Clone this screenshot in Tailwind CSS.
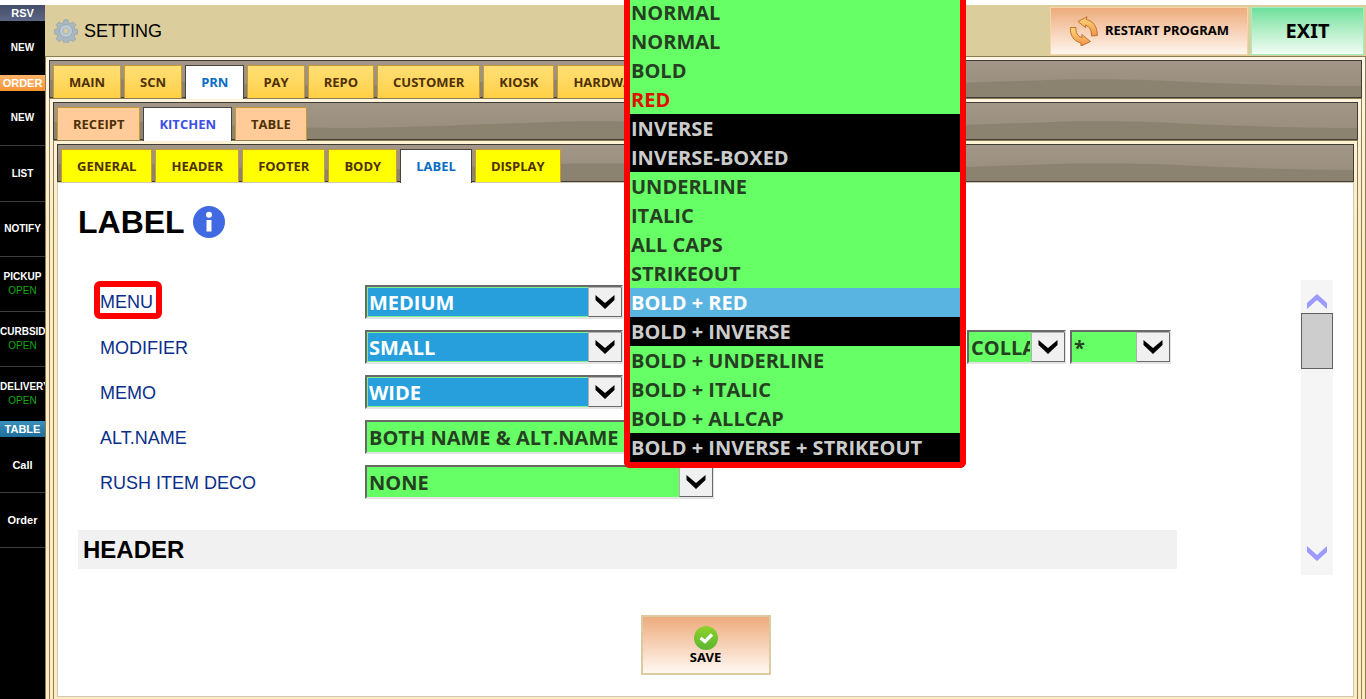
<!DOCTYPE html>
<html lang="en">
<head>
  <meta charset="UTF-8">
  <meta name="viewport" content="width=device-width, initial-scale=1.0">
  <title>Setting - Label</title>
  <script src="https://cdn.jsdelivr.net/npm/@tailwindcss/browser@4"></script>
</head>
<body class="h-screen flex flex-col overflow-hidden bg-white pt-[5px] text-black font-['Liberation_Sans',Arial,sans-serif]">

  <!-- Shared drawings -->
  <svg class="absolute size-0" aria-hidden="true">
    <defs>
      <linearGradient id="shade" x1="0" y1="0" x2="0" y2="1">
        <stop offset="0" stop-color="#a19687"/>
        <stop offset="1" stop-color="#978c7b"/>
      </linearGradient>
      <pattern id="wave" width="500" height="38" patternUnits="userSpaceOnUse">
        <rect width="500" height="38" fill="url(#shade)"/>
        <path d="M0 19C20 18 80 18 120 20S240 25 291 25S460 20 500 19V38H0Z" fill="#8b826f"/>
      </pattern>
      <symbol id="chevron" viewBox="0 0 20 14">
        <path d="M.500 0L10 8L19.500 0V5L10 14L.500 5Z"/>
      </symbol>
    </defs>
  </svg>

  <div class="flex-1 flex min-h-0">

    <!-- Sidebar -->
    <nav class="w-[45px] shrink-0 overflow-hidden bg-black text-white text-center text-[11px] leading-[14px] font-bold">
      <h2 class="h-4 leading-4 bg-linear-to-b from-[#454d69] to-[#5b6785]">RSV</h2>
      <a href="#" class="h-[54px] flex flex-col items-center justify-center text-[10px]">NEW</a>
      <h2 class="h-4 leading-4 bg-linear-to-b from-[#ffb469] to-[#f79433]">ORDER</h2>
      <a href="#" class="h-[55px] flex flex-col items-center justify-center border-b border-[#3c3c3c] text-[10px]">NEW</a>
      <a href="#" class="h-14 flex flex-col items-center justify-center border-b border-[#3c3c3c] text-[10px]">LIST</a>
      <a href="#" class="h-[55px] flex flex-col items-center justify-center border-b border-[#3c3c3c] text-[10px]">NOTIFY</a>
      <a href="#" class="h-[55px] flex flex-col items-center justify-center border-b border-[#3c3c3c] text-[10px]">PICKUP <span class="font-normal text-[#13a813]">OPEN</span></a>
      <a href="#" class="h-[55px] flex flex-col justify-center border-b border-[#3c3c3c] text-[10px]">CURBSIDE <span class="font-normal text-[#13a813]">OPEN</span></a>
      <a href="#" class="h-[54px] flex flex-col justify-center text-[10px]">DELIVERY <span class="font-normal text-[#13a813]">OPEN</span></a>
      <h2 class="h-4 leading-4 bg-linear-to-b from-[#3a90bd] to-[#1f6d9b]">TABLE</h2>
      <a href="#" class="h-14 flex flex-col items-center justify-center border-b border-[#3c3c3c]">Call</a>
      <a href="#" class="h-[55px] flex flex-col items-center justify-center border-b border-[#3c3c3c]">Order</a>
    </nav>

    <div class="flex-1 flex flex-col min-w-0">

      <!-- Title bar -->
      <header class="h-[51px] flex items-center gap-1.5 pl-[9px] pr-0.5 bg-[#dccd9c]">
        <svg class="size-6" viewBox="0 0 24 24">
          <g fill="#a9b8c2" stroke="#8c9aa3" stroke-width=".6">
            <path d="M10 .8h4l.6 3 2 .8 2.500-1.700 2.800 2.800-1.700 2.500.8 2 3 .6v4l-3 .6-.8 2 1.700 2.500-2.800 2.800-2.500-1.700-2 .8-.6 3h-4l-.6-3-2-.8-2.500 1.700-2.800-2.800 1.700-2.500-.8-2-3-.6v-4l3-.6.8-2L2.100 5.700l2.800-2.800 2.500 1.700 2-.8z"/>
          </g>
          <circle cx="12" cy="12" r="6.500" fill="#bccad2" stroke="#93a3ad" stroke-width=".8"/>
          <circle cx="12" cy="12" r="3.500" fill="#aebcc5"/>
          <circle cx="12" cy="12" r="2.200" fill="#dccd9c"/>
        </svg>
        <h1 class="flex-1 text-lg">SETTING</h1>
        <div class="flex gap-[3px] h-12 font-['Noto_Sans','Open_Sans',sans-serif] font-bold">
          <button type="button" class="w-[198px] flex items-center justify-center gap-[6px] border border-[#f8d3a4] bg-linear-to-b from-[#edab7c] to-[#fef6ee] text-[13px]">
            <svg class="size-[30px]" viewBox="0 0 30 30">
              <defs>
                <linearGradient id="arrow" x1="0" y1="0" x2="0" y2="1">
                  <stop offset="0" stop-color="#ffd777"/>
                  <stop offset="1" stop-color="#f5934a"/>
                </linearGradient>
              </defs>
              <g fill="url(#arrow)" stroke="#b36a28" stroke-width=".9" stroke-linejoin="round">
                <path d="M9 5.500L18 .8L17.300 3.500C24 5 28.500 10.500 28.300 19.500L22.500 20C22.700 14 20.500 10.500 16.500 9L16.800 11.800Z"/>
                <path d="M1.500 11.500H7C6.500 16.500 8.500 20.500 13 21.500L12.800 18.500L21.500 25.500L12 30V27C5 25.500 .8 19.500 1.500 11.500Z"/>
              </g>
            </svg>
            RESTART PROGRAM
          </button>
          <button type="button" class="w-[113px] border border-[#9df0bd] bg-linear-to-b from-[#6be09c] to-[#f2fcf5] text-xl">EXIT</button>
        </div>
      </header>

      <!-- Level 1 -->
      <div class="flex-1 flex flex-col min-h-0 border-t border-x border-[#8d7c55] bg-linear-to-b from-[#fff6e6] to-[#fcecc0] to-30% px-[3px] pt-[3px] font-['Open_Sans','Noto_Sans',sans-serif]">
        <div class="relative h-[38px] border border-[#423d33]">
          <svg class="absolute inset-0 size-full"><rect width="100%" height="100%" fill="url(#wave)"/></svg>
          <nav class="relative flex gap-[3px] pt-1 pl-[3px] text-[13px] leading-[32px] font-bold text-[#4f3005]">
            <a href="#" class="h-[33px] px-[15px] border border-b-0 border-[#c99a33] bg-linear-to-b from-[#ffdf74] to-[#ffd044]">MAIN</a>
            <a href="#" class="h-[33px] px-[15px] border border-b-0 border-[#c99a33] bg-linear-to-b from-[#ffdf74] to-[#ffd044]">SCN</a>
            <a href="#" class="h-[34px] z-10 px-[15px] border border-b-0 border-[#4a463f] bg-white text-[#0a6cc4]">PRN</a>
            <a href="#" class="h-[33px] px-[15px] border border-b-0 border-[#c99a33] bg-linear-to-b from-[#ffdf74] to-[#ffd044]">PAY</a>
            <a href="#" class="h-[33px] px-[15px] border border-b-0 border-[#c99a33] bg-linear-to-b from-[#ffdf74] to-[#ffd044]">REPO</a>
            <a href="#" class="h-[33px] px-[15px] border border-b-0 border-[#c99a33] bg-linear-to-b from-[#ffdf74] to-[#ffd044]">CUSTOMER</a>
            <a href="#" class="h-[33px] px-[15px] border border-b-0 border-[#c99a33] bg-linear-to-b from-[#ffdf74] to-[#ffd044]">KIOSK</a>
            <a href="#" class="h-[33px] px-[15px] border border-b-0 border-[#c99a33] bg-linear-to-b from-[#ffdf74] to-[#ffd044]">HARDWARE</a>
          </nav>
        </div>

        <!-- Level 2 -->
        <div class="flex-1 flex flex-col min-h-0 border-t border-x border-[#8d7c55] px-[3px] pt-[3px]">
          <div class="relative h-[38px] border border-[#423d33]">
            <svg class="absolute inset-0 size-full"><rect width="100%" height="100%" fill="url(#wave)"/></svg>
            <nav class="relative flex gap-[3px] pt-1 pl-[3px] text-[13px] leading-[32px] font-bold text-[#4f3005]">
              <a href="#" class="h-[33px] px-[15px] border border-b-0 border-[#c99a33] bg-[#ffcc99]">RECEIPT</a>
              <a href="#" class="h-[34px] z-10 px-[15px] border border-b-0 border-[#4a463f] bg-white text-[#3c50e6]">KITCHEN</a>
              <a href="#" class="h-[33px] px-[15px] border border-b-0 border-[#c99a33] bg-[#ffcc99]">TABLE</a>
            </nav>
          </div>

          <!-- Level 3 -->
          <div class="flex-1 flex flex-col min-h-0 border-t border-x border-[#8d7c55] px-[3px] pt-[3px] pb-0.5">
            <div class="relative h-[38px] border border-[#423d33]">
              <svg class="absolute inset-0 size-full"><rect width="100%" height="100%" fill="url(#wave)"/></svg>
              <nav class="relative flex gap-[3px] pt-1 pl-[3px] text-[13px] leading-[32px] font-bold text-[#4f3005]">
                <a href="#" class="h-[33px] px-[15px] border border-b-0 border-[#c99a33] bg-[#ffff00]">GENERAL</a>
                <a href="#" class="h-[33px] px-[15px] border border-b-0 border-[#c99a33] bg-[#ffff00]">HEADER</a>
                <a href="#" class="h-[33px] px-[15px] border border-b-0 border-[#c99a33] bg-[#ffff00]">FOOTER</a>
                <a href="#" class="h-[33px] px-[15px] border border-b-0 border-[#c99a33] bg-[#ffff00]">BODY</a>
                <a href="#" class="h-[34px] z-10 px-[15px] border border-b-0 border-[#4a463f] bg-white text-[#0a6cc4]">LABEL</a>
                <a href="#" class="h-[33px] px-[15px] border border-b-0 border-[#c99a33] bg-[#ffff00]">DISPLAY</a>
              </nav>
            </div>

            <main class="flex-1 flex flex-col border border-[#d0c8b2] bg-white pl-5 pr-5 pt-5 font-['Liberation_Sans',Arial,sans-serif]">
              <div class="flex items-center gap-2 h-[38px]">
                <h2 class="text-[32px] font-bold">LABEL</h2>
                <svg class="size-8" viewBox="0 0 32 32" role="img" aria-label="Info">
                  <circle cx="16" cy="16" r="16" fill="#4169e1"/>
                  <circle cx="16" cy="8.800" r="3" fill="#fff"/>
                  <path d="M13.500 14h5v11.500h-5z" fill="#fff"/>
                </svg>
              </div>

              <div class="flex mt-[39px]">
                <form class="flex-1 mr-[124px] text-lg text-[#0a2f8a]">
                  <div class="flex flex-col gap-[11px] pt-[5px] pl-[22px]">
                    <div class="flex items-center h-[34px]">
                      <div class="w-[265px] flex">
                        <label for="menuSize" class="-ml-1.5 -mt-1 pt-[5px] pr-[3px] border-6 border-[#ff0000] rounded-md leading-[21px]">MENU</label>
                      </div>
                      <div class="flex gap-1 font-['Open_Sans','Noto_Sans',sans-serif]">
                        <div class="relative">
                          <select id="menuSize" class="appearance-none block w-[258px] h-[34px] pt-0.5 pl-0.5 pr-[34px] border-2 border-t-[#696969] border-l-[#696969] border-r-[#e3e3e3] border-b-[#e3e3e3] bg-[#269fdc] shadow-[inset_0_0_0_1px_#7cf08c] text-xl leading-none font-bold text-white">
                            <option>MEDIUM</option>
                          </select>
                          <span class="absolute right-px top-0.5 bottom-0.5 w-[34px] flex justify-center pt-[7px] border border-[#696969] border-t-[#b0b0b0] border-l-[#b0b0b0] bg-[#f0f0f0] pointer-events-none"><svg class="w-5 h-3.5"><use href="#chevron"/></svg></span>
                        </div>
                        <div class="relative">
                          <select aria-label="Menu style" class="appearance-none block w-[336px] h-[34px] border-2 border-[#696969] bg-[#66ff66] text-xl">
                            <option></option>
                          </select>
                          <!-- Open style list -->
                          <ul role="listbox" aria-label="Menu style" class="absolute z-20 -left-[3px] -bottom-[149px] w-[342px] border-6 border-t-0 border-[#ff0000] rounded-b-md bg-[#66ff66] text-xl leading-[29px] font-bold text-[#263f22] *:pl-px">
                            <li role="option">NORMAL</li>
                            <li role="option">NORMAL</li>
                            <li role="option">BOLD</li>
                            <li role="option" class="text-[#e01000]">RED</li>
                            <li role="option" class="bg-black text-[#cccccc]">INVERSE</li>
                            <li role="option" class="bg-black text-[#cccccc]">INVERSE-BOXED</li>
                            <li role="option">UNDERLINE</li>
                            <li role="option">ITALIC</li>
                            <li role="option">ALL CAPS</li>
                            <li role="option">STRIKEOUT</li>
                            <li role="option" aria-selected="true" class="bg-[#5ab4e2] text-white">BOLD + RED</li>
                            <li role="option" class="bg-black text-[#cccccc]">BOLD + INVERSE</li>
                            <li role="option">BOLD + UNDERLINE</li>
                            <li role="option">BOLD + ITALIC</li>
                            <li role="option">BOLD + ALLCAP</li>
                            <li role="option" class="bg-black text-[#cccccc]">BOLD + INVERSE + STRIKEOUT</li>
                          </ul>
                        </div>
                      </div>
                    </div>

                    <div class="flex items-center h-[34px]">
                      <label for="modifierSize" class="w-[265px] pt-0.5">MODIFIER</label>
                      <div class="flex gap-1 font-['Open_Sans','Noto_Sans',sans-serif]">
                        <div class="relative">
                          <select id="modifierSize" class="appearance-none block w-[258px] h-[34px] pt-0.5 pl-0.5 pr-[34px] border-2 border-t-[#696969] border-l-[#696969] border-r-[#e3e3e3] border-b-[#e3e3e3] bg-[#269fdc] shadow-[inset_0_0_0_1px_#7cf08c] text-xl leading-none font-bold text-white">
                            <option>SMALL</option>
                          </select>
                          <span class="absolute right-px top-0.5 bottom-0.5 w-[34px] flex justify-center pt-[7px] border border-[#696969] border-t-[#b0b0b0] border-l-[#b0b0b0] bg-[#f0f0f0] pointer-events-none"><svg class="w-5 h-3.5"><use href="#chevron"/></svg></span>
                        </div>
                        <select aria-label="Modifier style" class="appearance-none block w-[336px] h-[34px] border-2 border-[#696969] bg-[#66ff66] text-xl">
                          <option></option>
                        </select>
                        <div class="relative">
                          <select aria-label="Modifier layout" class="appearance-none block w-[99px] h-[34px] pt-0.5 pl-0.5 pr-[34px] border-2 border-t-[#696969] border-l-[#696969] border-r-[#e3e3e3] border-b-[#e3e3e3] bg-[#66ff66] text-xl leading-none font-bold text-[#263f22]">
                            <option>COLLAPSE</option>
                          </select>
                          <span class="absolute right-px top-0.5 bottom-0.5 w-[34px] flex justify-center pt-[7px] border border-[#696969] border-t-[#b0b0b0] border-l-[#b0b0b0] bg-[#f0f0f0] pointer-events-none"><svg class="w-5 h-3.5"><use href="#chevron"/></svg></span>
                        </div>
                        <div class="relative">
                          <select aria-label="Modifier bullet" class="appearance-none block w-[101px] h-[34px] pt-0.5 pl-0.5 pr-[34px] border-2 border-t-[#696969] border-l-[#696969] border-r-[#e3e3e3] border-b-[#e3e3e3] bg-[#66ff66] text-xl leading-none font-bold text-[#263f22]">
                            <option>*</option>
                          </select>
                          <span class="absolute right-px top-0.5 bottom-0.5 w-[34px] flex justify-center pt-[7px] border border-[#696969] border-t-[#b0b0b0] border-l-[#b0b0b0] bg-[#f0f0f0] pointer-events-none"><svg class="w-5 h-3.5"><use href="#chevron"/></svg></span>
                        </div>
                      </div>
                    </div>

                    <div class="flex items-center h-[34px]">
                      <label for="memoSize" class="w-[265px] pt-0.5">MEMO</label>
                      <div class="relative font-['Open_Sans','Noto_Sans',sans-serif]">
                        <select id="memoSize" class="appearance-none block w-[258px] h-[34px] pt-0.5 pl-0.5 pr-[34px] border-2 border-t-[#696969] border-l-[#696969] border-r-[#e3e3e3] border-b-[#e3e3e3] bg-[#269fdc] shadow-[inset_0_0_0_1px_#7cf08c] text-xl leading-none font-bold text-white">
                          <option>WIDE</option>
                        </select>
                        <span class="absolute right-px top-0.5 bottom-0.5 w-[34px] flex justify-center pt-[7px] border border-[#696969] border-t-[#b0b0b0] border-l-[#b0b0b0] bg-[#f0f0f0] pointer-events-none"><svg class="w-5 h-3.5"><use href="#chevron"/></svg></span>
                      </div>
                    </div>

                    <div class="flex items-center h-[34px]">
                      <label for="altName" class="w-[265px] pt-0.5">ALT.NAME</label>
                      <div class="relative font-['Open_Sans','Noto_Sans',sans-serif]">
                        <select id="altName" class="appearance-none block w-[349px] h-[34px] pt-0.5 pl-0.5 pr-[34px] border-2 border-t-[#696969] border-l-[#696969] border-r-[#e3e3e3] border-b-[#e3e3e3] bg-[#66ff66] text-xl leading-none font-bold text-[#263f22]">
                          <option>BOTH NAME &amp; ALT.NAME</option>
                        </select>
                        <span class="absolute right-px top-0.5 bottom-0.5 w-[34px] flex justify-center pt-[7px] border border-[#696969] border-t-[#b0b0b0] border-l-[#b0b0b0] bg-[#f0f0f0] pointer-events-none"><svg class="w-5 h-3.5"><use href="#chevron"/></svg></span>
                      </div>
                    </div>

                    <div class="flex items-center h-[34px]">
                      <label for="rushDeco" class="w-[265px] pt-0.5">RUSH ITEM DECO</label>
                      <div class="relative font-['Open_Sans','Noto_Sans',sans-serif]">
                        <select id="rushDeco" class="appearance-none block w-[349px] h-[34px] pt-0.5 pl-0.5 pr-[34px] border-2 border-t-[#696969] border-l-[#696969] border-r-[#e3e3e3] border-b-[#e3e3e3] bg-[#66ff66] text-xl leading-none font-bold text-[#263f22]">
                          <option>NONE</option>
                        </select>
                        <span class="absolute right-px top-0.5 bottom-0.5 w-[34px] flex justify-center pt-[7px] border border-[#696969] border-t-[#b0b0b0] border-l-[#b0b0b0] bg-[#f0f0f0] pointer-events-none"><svg class="w-5 h-3.5"><use href="#chevron"/></svg></span>
                      </div>
                    </div>
                  </div>

                  <h3 class="mt-[31px] pl-[5px] bg-[#f1f1f1] text-2xl leading-[39px] font-bold text-black">HEADER</h3>
                </form>

                <!-- Scroll buttons and thumb -->
                <div class="w-8 h-[295px] flex flex-col bg-[#f5f5f5]">
                  <button type="button" aria-label="Scroll up" class="h-[33px] flex items-end justify-center pb-1">
                    <svg class="w-5 h-[15px] rotate-180 fill-[#9c99ff]" viewBox="0 0 20 15"><path d="M0 0L10 9L20 0V6L10 15L0 6Z"/></svg>
                  </button>
                  <div class="h-14 border border-[#606060] bg-[#cdcdcd]"></div>
                  <button type="button" aria-label="Scroll down" class="mt-auto h-[33px] flex items-start justify-center pt-1">
                    <svg class="w-5 h-[15px] fill-[#9c99ff]" viewBox="0 0 20 15"><path d="M0 0L10 9L20 0V6L10 15L0 6Z"/></svg>
                  </button>
                </div>
              </div>

              <button type="button" class="self-center mt-10 w-[130px] h-[60px] flex flex-col items-center justify-center border-2 border-[#dccba0] bg-linear-to-b from-[#edab7c] to-[#fef8f2] font-['Noto_Sans','Open_Sans',sans-serif] text-[13px] leading-[15px] font-bold">
                <svg class="size-6" viewBox="0 0 24 24">
                  <defs>
                    <linearGradient id="ok" x1="0" y1="0" x2="0" y2="1">
                      <stop offset="0" stop-color="#8fd22a"/>
                      <stop offset="1" stop-color="#5bb533"/>
                    </linearGradient>
                  </defs>
                  <circle cx="12" cy="12" r="12" fill="url(#ok)"/>
                  <path d="M6.500 12L11 15.500L18 8.500" fill="none" stroke="#fff" stroke-width="3.200"/>
                </svg>
                SAVE
              </button>
            </main>
          </div>
        </div>
      </div>
    </div>
  </div>

</body>
</html>
